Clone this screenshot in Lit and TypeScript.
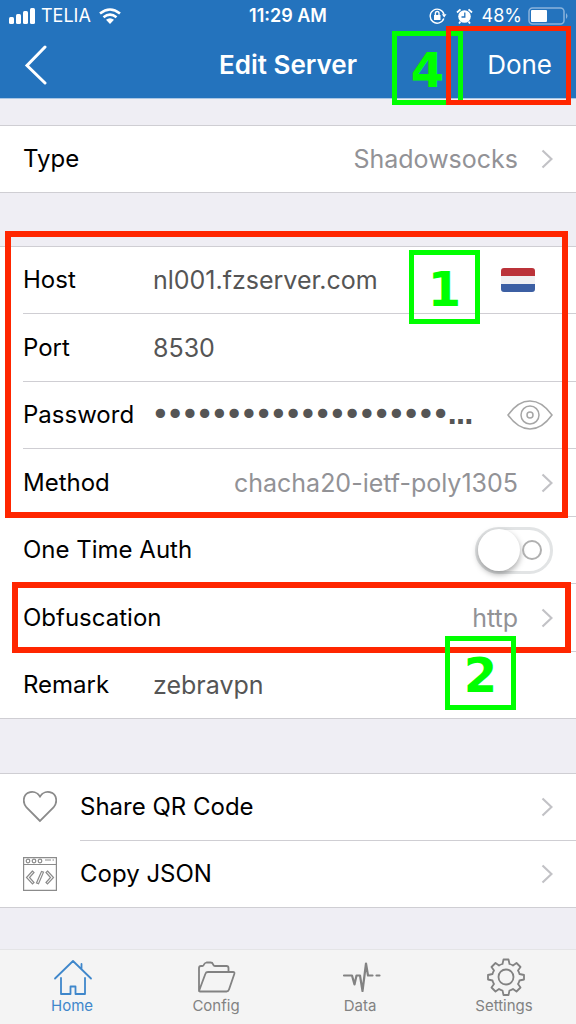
import { LitElement, html, css, svg } from "lit";
import { customElement, state } from "lit/decorators.js";

const chevron = html`<svg class="chevron" width="12" height="20" viewBox="0 0 12 20" aria-hidden="true">
  <path d="M1.5 1.5 10.5 10 1.5 18.5" fill="none" stroke="#c2c2c6" stroke-width="2.2" />
</svg>`;

const homeIcon = svg`<path d="M2 20.500 20 3 38 20.500M28.500 11V6M8 20V36h9.500v-7.500h5V36H32V20" />`;
const folderIcon = svg`<path d="M2 33V10q0-2 2-2h1.500q1 0 1.500-1.500T9.500 4.500h4Q15.500 4.500 16 6.300T18 8H29.500q2 0 2 2V14M2 33 8.500 15.500Q9 14 11 14H36q2 0 1.300 2L32 31.500Q31.300 33.500 29.500 33.500H3Q2 33.500 2 33Z" />`;
const dataIcon = svg`<path d="M3 17.500H11L13.500 26.500 15.500 17.500h3.500L21.500 33 25 5.500 27 17.500H31.500M35.500 17.500H38.500" stroke-width="2.200" />`;
const gearIcon = svg`<circle cx="21" cy="19" r="7.500" />
  <path d="M18.500 1.500h5l1 4.500q2 .5 3.500 1.500l3.500-2.500 4 4L33 12.500q1 1.500 1.500 3.500l4.500 1v4.500l-4.500 1q-.5 2-1.500 3.500l2.500 3.500-4 4L28 31q-1.500 1-3.500 1.500l-1 4.500h-5l-1-4.500Q15.500 32 14 31l-3.500 2.500-4-4L9 26q-1-1.500-1.500-3.500l-4.500-1V17l4.500-1Q8 14 9 12.500L6.500 9l4-4L14 7.500Q15.500 6.500 17.500 6Z" />`;

const tabs = [
  { name: "Home", icon: homeIcon },
  { name: "Config", icon: folderIcon },
  { name: "Data", icon: dataIcon },
  { name: "Settings", icon: gearIcon },
];

@customElement("app-root")
export class AppRoot extends LitElement {
  @state() private active = "Home";

  static styles = css`
    :host {
      display: flex;
      flex-direction: column;
      min-height: 100vh;
      background: #efeef4;
      color: #000;
      font-family: Inter, "Liberation Sans", sans-serif;
      font-size: 24px;
      line-height: 32px;
    }
    * {
      box-sizing: border-box;
    }
    button,
    input {
      font: inherit;
      color: inherit;
      background: none;
      border: 0;
      margin: 0;
      padding: 0;
      text-align: left;
    }
    svg {
      display: block;
      flex: none;
    }
    .top {
      position: relative;
      background: #2473bd;
      color: #fff;
      border-bottom: 1px solid #a9c6e4;
    }
    .status,
    .nav {
      display: grid;
      grid-template-columns: 1fr auto 1fr;
      align-items: center;
    }
    .status {
      height: 32px;
      padding: 0 8px;
      font-size: 18px;
    }
    .time {
      font-weight: 600;
    }
    .cluster {
      display: flex;
      align-items: center;
      gap: 6px;
    }
    .cluster-end {
      justify-content: flex-end;
      gap: 9px;
    }
    .nav {
      height: 66px;
      padding: 0 24px;
    }
    .title {
      margin: 0;
      font-size: 26px;
      font-weight: 600;
    }
    .done {
      justify-self: end;
      font-size: 26px;
    }
    .group {
      position: relative;
      background: #fff;
      border-top: 1px solid #cfced3;
      border-bottom: 1px solid #cfced3;
    }
    .type {
      margin: 26px 0 53px;
    }
    .actions {
      margin: 54px 0 41px;
    }
    .row {
      display: flex;
      align-items: center;
      width: 100%;
      height: 67px;
      padding-left: 23px;
    }
    .row:nth-of-type(even) {
      height: 68px;
    }
    .row.last {
      height: 66px;
    }
    .body {
      display: flex;
      flex: 1;
      align-items: center;
      align-self: stretch;
      min-width: 0;
      padding-right: 23px;
      border-bottom: 1px solid #cfced3;
    }
    .last .body {
      border-bottom: 0;
    }
    .label {
      width: 130px;
      flex: none;
    }
    .wide {
      flex: 1;
      width: auto;
    }
    .input {
      flex: 1;
      min-width: 0;
      height: 32px;
      outline: 0;
      color: #555;
      font-size: 25px;
      text-overflow: ellipsis;
    }
    .input[type="password"] {
      font: 25px/32px "DejaVu Sans", sans-serif;
      -webkit-text-stroke: 2px #555;
    }
    .value {
      flex: 1;
      text-align: right;
      color: #929296;
      font-size: 25px;
    }
    .chevron {
      margin-left: 23px;
    }
    .flag {
      margin-right: 18px;
    }
    .eye {
      margin-left: 32px;
    }
    .switch {
      display: flex;
      align-items: center;
      justify-content: space-between;
      appearance: none;
      width: 78px;
      height: 47px;
      border: 3px solid #e2e4e5;
      border-radius: 24px;
      cursor: pointer;
    }
    .switch::before {
      content: "";
      width: 42px;
      height: 42px;
      border-radius: 50%;
      background: #fff;
      box-shadow: 0 3px 6px rgb(0 0 0 / 35%);
    }
    .switch::after {
      content: "";
      width: 16px;
      height: 16px;
      margin-right: 8px;
      border: 2px solid #b0b0b0;
      border-radius: 50%;
    }
    .switch:checked {
      flex-direction: row-reverse;
      background: #4cd964;
    }
    .icon {
      margin-right: 23px;
    }
    .tabs {
      display: grid;
      grid-template-columns: repeat(4, 1fr);
      margin-top: auto;
      height: 75px;
      padding-top: 8px;
      background: #f4f4f4;
      border-top: 1px solid #e4e4e6;
    }
    .tab {
      display: flex;
      flex-direction: column;
      align-items: center;
      color: #828282;
      font-size: 15px;
      line-height: 20px;
      text-decoration: none;
    }
    .tab-active {
      color: #3f87cb;
    }
    .frame,
    .step {
      position: absolute;
      pointer-events: none;
    }
    .frame {
      z-index: 2;
      border: 6px solid #ff2600;
    }
    .step {
      z-index: 3;
      display: grid;
      place-items: center;
      width: 71px;
      height: 74px;
      padding-top: 4px;
      border: 5px solid #0f0;
      color: #0f0;
      font: bold 48px/56px "DejaVu Sans", sans-serif;
    }
    .frame-done {
      top: 26px;
      right: 5px;
      width: 125px;
      height: 79px;
      border-width: 5px;
    }
    .step-done {
      z-index: 1;
      top: 31px;
      right: 113px;
    }
    .frame-server {
      top: -16px;
      left: 5px;
      right: 8px;
      height: 287px;
    }
    .step-server {
      top: 3px;
      right: 96px;
    }
    .frame-obfs {
      top: 335px;
      left: 12px;
      right: 5px;
      height: 71px;
    }
    .step-obfs {
      top: 389px;
      right: 60px;
    }
  `;

  private renderField(id: string, label: string, value: string, extra: unknown = "", type = "text", last = false) {
    return html`<div class="row ${last ? "last" : ""}">
      <div class="body">
        <label class="label" for=${id}>${label}</label>
        <input class="input" id=${id} type=${type} .value=${value} autocomplete="off" spellcheck="false" />
        ${extra}
      </div>
    </div>`;
  }

  private renderPick(label: string, value: string, last = false) {
    return html`<div class="row ${last ? "last" : ""}">
      <button class="body" type="button">
        <span>${label}</span><span class="value">${value}</span>${chevron}
      </button>
    </div>`;
  }

  private renderTop() {
    return html`<header class="top">
      <div class="status">
        <div class="cluster">
          <svg width="27" height="16" viewBox="0 0 27 16" fill="#fff" aria-hidden="true">
            <rect x="1" y="9" width="5" height="7" rx="1.500" />
            <rect x="8" y="6" width="5" height="10" rx="1.500" />
            <rect x="15" y="3" width="5" height="13" rx="1.500" />
            <rect x="22" y="0" width="5" height="16" rx="1.500" />
          </svg>
          <span>TELIA</span>
          <svg width="24" height="16" viewBox="0 0 24 16" fill="none" stroke="#fff" stroke-width="2.600" aria-hidden="true">
            <path d="M3 5.500Q13-2.500 23 5.500M6.500 9.300Q13 4 19.500 9.300" />
            <path d="M9 11.800Q13 8.500 17 11.800L13 16Z" fill="#fff" stroke="none" />
          </svg>
        </div>
        <span class="time">11:29 AM</span>
        <div class="cluster cluster-end">
          <svg width="18" height="16" viewBox="0 0 18 16" fill="none" stroke="#fff" stroke-width="1.400" aria-hidden="true">
            <path d="M14.800 10.500A7 7 0 1 1 15 6.500" />
            <path d="M12.800 6.200h4.700l-2.300 3.300Z" fill="#fff" stroke="none" />
            <rect x="5" y="7" width="6.500" height="5" fill="#fff" stroke="none" />
            <path d="M6.400 7.500V5.300a1.800 1.800 0 0 1 3.600 0v2.200" />
          </svg>
          <svg width="17" height="16" viewBox="0 0 17 16" fill="none" stroke="#fff" aria-hidden="true">
            <circle cx="8.500" cy="8.500" r="6.300" fill="#fff" stroke="none" />
            <path d="M1 4.500 4.500 1.300M16 4.500 12.500 1.300M4.500 13.500l-1.500 2M12.500 13.500l1.500 2" stroke-width="1.800" />
            <path d="M8.800 4.500V9H5.500" stroke="#2473bd" stroke-width="1.300" />
          </svg>
          <div class="cluster">
            <span>48%</span>
            <svg width="40" height="18" viewBox="0 0 40 18" aria-hidden="true">
              <rect x="1" y="1" width="35" height="16" rx="3.500" fill="none" stroke="#8bb4dc" stroke-width="1.500" />
              <rect x="3" y="3" width="16" height="12" rx="1" fill="#fff" />
              <path d="M38 6q3 3 0 6Z" fill="#8bb4dc" />
            </svg>
          </div>
        </div>
      </div>
      <div class="nav">
        <button type="button" aria-label="Back">
          <svg width="24" height="40" viewBox="0 0 24 40" aria-hidden="true">
            <path d="M21 2 3 20.500 21 38" fill="none" stroke="#fff" stroke-width="3" stroke-linecap="round" />
          </svg>
        </button>
        <h1 class="title">Edit Server</h1>
        <button class="done" type="button">Done</button>
      </div>
      <div class="step step-done">4</div>
      <div class="frame frame-done"></div>
    </header>`;
  }

  render() {
    const flag = html`<svg class="flag" width="34" height="24" viewBox="0 0 34 24" role="img" aria-label="Netherlands">
      <rect x="0" y="0" width="34" height="24" rx="3" fill="#f0f0f2" />
      <path d="M0 8V3q0-3 3-3h28q3 0 3 3v5Z" fill="#bb3339" />
      <path d="M0 16v5q0 3 3 3h28q3 0 3-3v-5Z" fill="#3c5fa3" />
    </svg>`;
    const eye = html`<button class="eye" type="button" aria-label="Show password">
      <svg width="46" height="30" viewBox="0 0 46 30" fill="none" stroke="#a6a6a6" stroke-width="1.500" aria-hidden="true">
        <path d="M1 15Q11 1 23 1t22 14Q35 29 23 29T1 15Z" />
        <circle cx="23" cy="15" r="9" />
        <circle cx="23" cy="15" r="3" />
      </svg>
    </button>`;

    return html`
      ${this.renderTop()}
      <section class="group type">${this.renderPick("Type", "Shadowsocks", true)}</section>
      <section class="group">
        ${this.renderField("host", "Host", "nl001.fzserver.com", flag)}
        ${this.renderField("port", "Port", "8530")}
        ${this.renderField("password", "Password", "k3Jx9vQm2Lw8Rt5Zp7Nc4Hs6", eye, "password")}
        ${this.renderPick("Method", "chacha20-ietf-poly1305")}
        <div class="row">
          <div class="body">
            <label class="label wide" for="auth">One Time Auth</label>
            <input class="switch" id="auth" type="checkbox" role="switch" />
          </div>
        </div>
        ${this.renderPick("Obfuscation", "http")}
        ${this.renderField("remark", "Remark", "zebravpn", "", "text", true)}
        <span class="frame frame-server"></span>
        <span class="step step-server">1</span>
        <span class="frame frame-obfs"></span>
        <span class="step step-obfs">2</span>
      </section>
      <section class="group actions">
        <div class="row">
          <svg class="icon" width="34" height="34" viewBox="0 0 34 34" fill="none" stroke="#8b8b8b" stroke-width="1.800" aria-hidden="true">
            <path d="M17 30 3.500 16.500C-1 11.500 .5 4 5 1.800 9.500 0 14.500 1 17 5.500 19.500 1 24.500 0 29 1.800 33.500 4 35 11.500 30.500 16.500Z" />
          </svg>
          <button class="body" type="button"><span class="wide">Share QR Code</span>${chevron}</button>
        </div>
        <div class="row last">
          <svg class="icon" width="34" height="34" viewBox="0 0 34 34" fill="none" stroke="#8b8b8b" stroke-width="1.200" aria-hidden="true">
            <path d="M.6.600h32.800v32.800H.6ZM.6 7.500h32.800M22 3h6M29.500 3H31" />
            <circle cx="5" cy="4" r="1.800" /><circle cx="11" cy="4" r="1.800" /><circle cx="17" cy="4" r="1.800" />
            <path d="M9.500 14 3.500 20.500 9.500 27 11 25.500 6.500 20.500 11 15.500ZM24.500 14 30.500 20.500 24.500 27 23 25.500 27.500 20.500 23 15.500ZM18.500 14.500 13.500 26 15.500 26.700 20.500 15.200Z" />
          </svg>
          <button class="body" type="button"><span class="wide">Copy JSON</span>${chevron}</button>
        </div>
      </section>
      <nav class="tabs">
        ${tabs.map(
          (t) => html`<a
            class="tab ${t.name === this.active ? "tab-active" : ""}"
            href="#${t.name.toLowerCase()}"
            @click=${() => (this.active = t.name)}
          >
            <svg width="38" height="38" viewBox="0 0 38 38" overflow="visible" fill="none" stroke="currentColor" stroke-width="1.800" stroke-linejoin="round" stroke-linecap="round" aria-hidden="true">${t.icon}</svg>
            <span>${t.name}</span>
          </a>`
        )}
      </nav>
    `;
  }
}
